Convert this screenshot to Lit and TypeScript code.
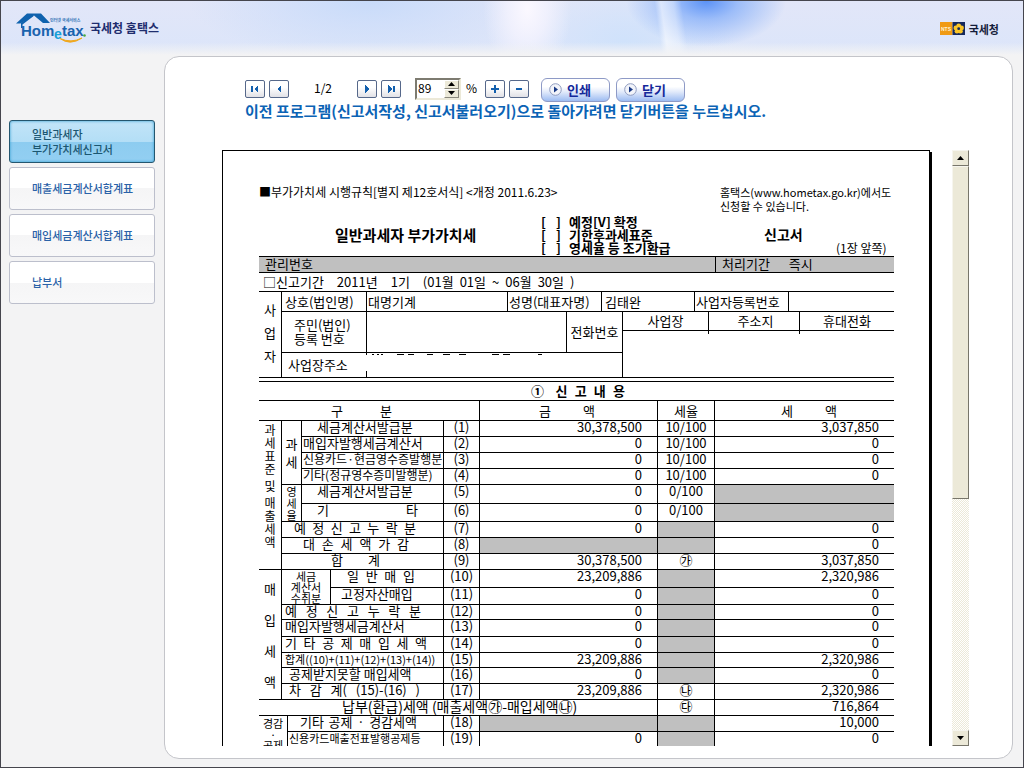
import { LitElement, html, css, svg, nothing } from "lit";
import { customElement, property, state } from "lit/decorators.js";
import { classMap } from "lit/directives/class-map.js";

type Label = {
  text: string;
  span: number;
  cls?: string;
  left?: number;
  right?: number;
};

type Group = { lines: string[]; rows: number; span: number; cls: string };

type Row = {
  h: number;
  groups?: Group[];
  label: Label;
  no?: string;
  amount?: string | null;
  rate?: string | null;
  tax?: string | null;
};

const ROWS: Row[] = [
  {
    h: 16,
    groups: [
      { lines: ["과", "세", "표", "준", "", "및", "", "매", "출", "세", "액"], rows: 9, span: 1, cls: "stack-13 small top" },
      { lines: ["과", "세"], rows: 4, span: 2, cls: "stack-18" },
    ],
    label: { text: "세금계산서발급분", span: 2, left: 15 },
    no: "(1)", amount: "30,378,500", rate: "10/100", tax: "3,037,850",
  },
  { h: 16, label: { text: "매입자발행세금계산서", span: 2, left: 1 }, no: "(2)", amount: "0", rate: "10/100", tax: "0" },
  { h: 16, label: { text: "신용카드·현금영수증발행분", span: 2, left: 1, cls: "small" }, no: "(3)", amount: "0", rate: "10/100", tax: "0" },
  { h: 16, label: { text: "기타(정규영수증미발행분)", span: 2, left: 1, cls: "small" }, no: "(4)", amount: "0", rate: "10/100", tax: "0" },
  {
    h: 19,
    groups: [{ lines: ["영", "세", "율"], rows: 2, span: 2, cls: "stack-12 tiny" }],
    label: { text: "세금계산서발급분", span: 2, left: 15 },
    no: "(5)", amount: "0", rate: "0/100", tax: null,
  },
  { h: 18, label: { text: "기 타", span: 2, left: 15, right: 25 }, no: "(6)", amount: "0", rate: "0/100", tax: null },
  { h: 16, label: { text: "예 정 신 고 누 락 분", span: 4, left: 12, right: 27 }, no: "(7)", amount: "0", rate: null, tax: "0" },
  { h: 16, label: { text: "대 손 세 액 가 감", span: 4, left: 21, right: 34 }, no: "(8)", amount: null, rate: null, tax: "0" },
  { h: 16, label: { text: "합 계", span: 4, left: 49, right: 63 }, no: "(9)", amount: "30,378,500", rate: "㉮", tax: "3,037,850" },
  {
    h: 18,
    groups: [
      { lines: ["매", "입", "세", "액"], rows: 8, span: 1, cls: "stack-31" },
      { lines: ["세금", "계산서", "수취분"], rows: 2, span: 3, cls: "stack-11 tiny" },
    ],
    label: { text: "일 반 매 입", span: 1, left: 16, right: 28 },
    no: "(10)", amount: "23,209,886", rate: null, tax: "2,320,986",
  },
  { h: 17, label: { text: "고정자산매입", span: 1, left: 10 }, no: "(11)", amount: "0", rate: null, tax: "0" },
  { h: 15, label: { text: "예 정 신 고 누 락 분", span: 4, left: 3, right: 22 }, no: "(12)", amount: "0", rate: null, tax: "0" },
  { h: 17, label: { text: "매입자발행세금계산서", span: 4, left: 3 }, no: "(13)", amount: "0", rate: null, tax: "0" },
  { h: 16, label: { text: "기 타 공 제 매 입 세 액", span: 4, left: 3, right: 16 }, no: "(14)", amount: "0", rate: null, tax: "0" },
  { h: 15, label: { text: "합계((10)+(11)+(12)+(13)+(14))", span: 4, left: 3, cls: "tiny" }, no: "(15)", amount: "23,209,886", rate: null, tax: "2,320,986" },
  { h: 16, label: { text: "공제받지못할 매입세액", span: 4, left: 7 }, no: "(16)", amount: "0", rate: null, tax: "0" },
  { h: 16, label: { text: "차 감 계( (15)-(16) )", span: 4, left: 7, right: 23 }, no: "(17)", amount: "23,209,886", rate: "㉯", tax: "2,320,986" },
  { h: 16, label: { text: "납부(환급)세액 (매출세액㉮-매입세액㉯)", span: 7, left: 83, cls: "first large" }, rate: "㉰", tax: "716,864" },
  {
    h: 16,
    groups: [{ lines: ["경감", "·", "공제"], rows: 2, span: 2, cls: "stack-11 tiny top first" }],
    label: { text: "기타 공제 · 경감세액", span: 3, left: 12, right: 26 },
    no: "(18)", amount: null, rate: null, tax: "10,000",
  },
  { h: 24, label: { text: "신용카드매출전표발행공제등", span: 3, left: 1, cls: "tiny" }, no: "(19)", amount: "0", rate: null, tax: "0" },
];

const px = (n: number) => `${n}px`;

@customElement("tax-return")
export class TaxReturn extends LitElement {
  static styles = css`
    :host {
      display: block;
      box-sizing: border-box;
      padding: 34px 35px 40px 36px;
      border: 1px solid #000;
      background: #fff;
      box-shadow: 2px 2px 0 #000;
      color: #000;
      font: 13px/14px "Noto Sans CJK KR", "Noto Sans", sans-serif;
      white-space: nowrap;
    }
    .intro { display: flex; justify-content: space-between; font-size: 12px; }
    .apply { width: 174px; margin: 0; font-size: 11px; }
    .rule { margin: 0; }
    .title {
      display: grid;
      grid-template-columns: 282px 1fr 174px;
      align-items: center;
      margin: 2px 0;
      font-size: 13px;
      line-height: 13px;
      font-weight: 700;
    }
    .title h1, .title h2 { margin: 0; line-height: 13px; }
    .title h1 { padding-left: 76px; font-size: 15px; }
    .title h2 { width: 72px; font-size: 14px; }
    .kinds { margin: 0; padding: 0; list-style: none; }
    .kinds li { display: flex; gap: 8px; }
    .box { display: flex; justify-content: space-between; width: 20px; }
    .side { display: flex; align-self: stretch; align-items: center; padding-left: 44px; }
    .page-no { align-self: flex-end; font-size: 12px; font-weight: 400; }
    .manage {
      display: flex;
      box-sizing: border-box;
      height: 17px;
      border-top: 1px solid #000;
      border-bottom: 1px solid #000;
      background: #c0c0c0;
    }
    .manage div { flex: 1; padding-left: 6px; }
    .manage .term { flex: none; width: 179px; box-sizing: border-box; display: flex; gap: 19px; border-left: 1px solid #000; }
    .period { display: flex; gap: 13px; height: 18px; padding-left: 4px; line-height: 18px; }
    .range { display: flex; gap: 6px; }
    table { width: 100%; table-layout: fixed; border-collapse: separate; border-spacing: 0; }
    td, th {
      padding: 0;
      border-top: 1px solid #000;
      border-left: 1px solid #000;
      font-weight: inherit;
      vertical-align: top;
      text-align: left;
    }
    .first { border-left: 0; }
    .owner { border-bottom: 1px solid #000; margin-bottom: 3px; }
    .owner td, .owner th { vertical-align: middle; }
    .owner .center, .center { text-align: center; }
    .left-1 { padding-left: 1px; }
    .left-3 { padding-left: 3px; }
    .left-6 { padding-left: 6px; }
    .left-12 { padding-left: 12px; }
    .owner .blank-phone {
      background:
        linear-gradient(#000, #000) 85px 0 / 1px 3px no-repeat,
        linear-gradient(#000, #000) 176px 0 / 1px 3px no-repeat;
    }
    .owner .address { border-left: 0; vertical-align: top; }
    .remains { display: block; width: 100%; height: 24px; }
    .report { line-height: 12px; }
    .wide { text-align-last: justify; }
    .subject { font-weight: 700; padding: 0 269px 0 272px; text-align-last: justify; vertical-align: middle; }
    .head th { vertical-align: middle; }
    .h-kind { padding: 0 87px 0 72px; }
    .h-amount { padding: 0 62px 0 59px; }
    .h-tax { padding: 0 57px 0 66px; }
    .num { text-align: right; padding-right: 15px; }
    .shade { background: #c0c0c0; }
    .large { font-size: 14px; }
    .small { font-size: 12px; }
    .tiny { font-size: 11px; }
    .group { text-align: center; vertical-align: middle; }
    .group span { display: block; }
    .stack-11 span { line-height: 11px; }
    .stack-12 span { line-height: 12px; }
    .stack-13 span { line-height: 13px; }
    .stack-18 span { line-height: 18px; }
    .stack-23 span { line-height: 23px; }
    .stack-31 span { line-height: 31px; }
    .group .gap { height: 4px; }
    .group.top { vertical-align: top; padding-top: 2px; }
    .owner .stack-23 { padding-bottom: 4px; }
  `;

  private group(g: Group, first: boolean) {
    return html`<th class="group ${g.cls} ${first ? "first" : ""}" rowspan=${g.rows} colspan=${g.span} scope="rowgroup">
      ${g.lines.map((l) => html`<span class=${classMap({ gap: !l })}>${l}</span>`)}
    </th>`;
  }

  private row(r: Row) {
    const { label: l } = r;
    const pad = `padding-left:${px(l.left ?? 0)};padding-right:${px(l.right ?? 0)}`;
    const cell = (v: string | null | undefined, cls: string) =>
      html`<td class="${cls} ${v === null ? "shade" : ""}">${v ?? nothing}</td>`;
    return html`<tr style="height:${px(r.h)}">
      ${r.groups?.map((g) => this.group(g, g.rows > 7))}
      <th class="${l.cls ?? ""} ${l.right ? "wide" : ""}" colspan=${l.span} style=${pad} scope="row">${l.text}</th>
      ${r.no ? html`<td class="center">${r.no}</td>${cell(r.amount, "num")}` : nothing}
      ${cell(r.rate, "center")} ${cell(r.tax, "num")}
    </tr>`;
  }

  private cols(widths: number[]) {
    return html`<colgroup>
      ${widths.map((w) => html`<col style="width:${px(w)}" />`)}
      <col />
    </colgroup>`;
  }

  render() {
    return html`
      <div class="intro">
        <p class="rule">■부가가치세 시행규칙[별지 제12호서식] &lt;개정 2011.6.23&gt;</p>
        <p class="apply">홈택스(www.hometax.go.kr)에서도<br />신청할 수 있습니다.</p>
      </div>
      <div class="title">
        <h1>일반과세자 부가가치세</h1>
        <ul class="kinds">
          ${["예정[V] 확정", "기한후과세표준", "영세율 등 조기환급"].map(
            (k) => html`<li><span class="box"><span>[</span><span>]</span></span>${k}</li>`
          )}
        </ul>
        <div class="side"><h2>신고서</h2><span class="page-no">(1장 앞쪽)</span></div>
      </div>
      <div class="manage">
        <div>관리번호</div>
        <div class="term"><span>처리기간</span><span>즉시</span></div>
      </div>
      <div class="period">
        <span>□신고기간</span><span>2011년</span><span>1기</span>
        <span class="range"><span>(01월</span><span>01일</span><span>~</span><span>06월</span><span>30일</span><span>)</span></span>
      </div>
      <table class="owner">
        ${this.cols([22, 85, 141, 59, 35, 21, 72, 14, 80, 11])}
        <tbody>
          <tr style="height:20px">
            <th class="group stack-23 first" rowspan="4"><span>사</span><span>업</span><span>자</span></th>
            <th class="left-3">상호(법인명)</th>
            <td class="left-1">대명기계</td>
            <th class="left-1" colspan="2">성명(대표자명)</th>
            <td class="left-3" colspan="2">김태완</td>
            <th class="left-1" colspan="2">사업자등록번호</th>
            <td colspan="2"></td>
          </tr>
          <tr style="height:19px">
            <th class="left-12" rowspan="2">주민(법인)<br />등록 번호</th>
            <td colspan="2" rowspan="2"></td>
            <th class="center" colspan="2" rowspan="2">전화번호</th>
            <th class="center" colspan="2">사업장</th>
            <th class="center" colspan="2">&nbsp;주소지</th>
            <th class="center">휴대전화</th>
          </tr>
          <tr style="height:22px">
            <td class="blank-phone" colspan="5" rowspan="2"></td>
          </tr>
          <tr style="height:25px">
            <th class="left-6">사업장주소</th>
            <td class="address" colspan="4">
              <svg class="remains" aria-hidden="true" shape-rendering="crispEdges">
                ${svg`<path d="M0.5 0v2M0.5 18v6" stroke="#000"/>
                <path d="M6 1.5h2M11 1.5h2M15 1.5h2M31 1.5h7M42 1.5h6M61 1.5h6M77 1.5h7M93 1.5h7M126 1.5h7M137 1.5h7M172 1.5h4" stroke="#000"/>`}
              </svg>
            </td>
          </tr>
        </tbody>
      </table>
      <table class="report">
        ${this.cols([22, 6, 14, 29, 113, 36, 178, 57])}
        <thead>
          <tr style="height:19px"><th class="first subject" colspan="9">① 신 고 내 용</th></tr>
          <tr class="head" style="height:20px">
            <th class="first wide h-kind" colspan="6">구 분</th>
            <th class="wide h-amount">금 액</th>
            <th class="center">세율</th>
            <th class="wide h-tax">세 액</th>
          </tr>
        </thead>
        <tbody>
          ${ROWS.map((r) => this.row(r))}
        </tbody>
      </table>
    `;
  }
}

@customElement("page-scrollbar")
export class PageScrollbar extends LitElement {
  static styles = css`
    :host { display: flex; flex-direction: column; width: 17px; }
    button {
      height: 16px;
      padding: 0;
      border: 1px solid;
      border-color: #f6f5ee #77756a #77756a #f6f5ee;
      background: #ece9d8;
      display: grid;
      place-items: center;
    }
    .track { flex: 1; background: repeating-conic-gradient(#ece9d8 0 25%, #fff 0 50%) 0 0 / 2px 2px; }
    .thumb {
      box-sizing: border-box;
      height: 59%;
      border: 1px solid;
      border-color: #f6f5ee #77756a #77756a #f6f5ee;
      background: #ece9d8;
    }
  `;
  render() {
    return html`
      <button aria-label="위로"><svg width="7" height="4"><path d="M0 4L3.5 0L7 4z" /></svg></button>
      <div class="track"><div class="thumb"></div></div>
      <button aria-label="아래로"><svg width="7" height="4"><path d="M0 0L3.5 4L7 0z" /></svg></button>
    `;
  }
}

@customElement("app-root")
export class AppRoot extends LitElement {
  @property({ type: Number }) zoom = 89;
  @state() private active = 0;

  static styles = css`
    :host {
      display: flex;
      flex-direction: column;
      box-sizing: border-box;
      height: 100vh;
      border: 1px solid #45454d;
      background: #f3f3f4;
      font-family: "Noto Sans CJK KR", "Noto Sans", sans-serif;
    }
    header {
      display: flex;
      justify-content: space-between;
      flex: none;
      height: 55px;
      padding: 0 24px 0 15px;
      background:
        linear-gradient(to bottom, transparent 75%, #f3f3f4 98%),
        linear-gradient(82deg, transparent 64.2%, #ffffff90 64.8%, #ffffff60 66%, transparent 66.8%),
        radial-gradient(ellipse 80px 46px at 69% 0, #5b92f6 0, #8cb3f9cc 40%, transparent 100%),
        radial-gradient(ellipse 44px 70px at 51.5% 8px, #fbf8ff 0, #f4f3fecc 45%, transparent 100%),
        radial-gradient(ellipse 180px 60px at 36% 0, #c8dbfa 0, transparent 100%),
        radial-gradient(ellipse 110px 60px at 61% 40px, #d0e2fb 0, transparent 100%),
        linear-gradient(to bottom, #e2e6f8, #dbe5fa);
    }
    .brand { display: flex; gap: 4px; text-decoration: none; color: #1f2d6e; }
    .brand svg { margin-top: 9px; }
    .brand b { font-size: 12px; line-height: 54px; }
    .agency { display: flex; align-items: center; gap: 4px; color: #141c3a; font-size: 11px; line-height: 54px; font-weight: 700; }
    .body { display: flex; flex: 1; min-height: 0; }
    nav { display: flex; flex-direction: column; gap: 4px; flex: none; width: 146px; padding: 64px 9px 0 8px; }
    nav button {
      height: 43px;
      padding: 0 0 0 22px;
      border: 1px solid #bcbfcc;
      border-radius: 3px;
      background: linear-gradient(#fff 50%, #f5f5f6 50%, #f8f8f9);
      color: #2a62a8;
      font: 500 11px/15px "Noto Sans CJK KR", "Noto Sans", sans-serif;
      text-align: left;
      white-space: pre-line;
    }
    nav .on {
      border-color: #24566f;
      background: linear-gradient(#c2e4f8, #b3def6 52%, #8dccf0 52%, #93cff2);
      box-shadow: inset 0 0 3px #2b9bd0;
      color: #1b5670;
    }
    main {
      display: flex;
      flex-direction: column;
      flex: 1;
      min-width: 0;
      margin: 0 10px 8px 0;
      padding: 21px 43px 12px 57px;
      border: 1px solid #c4c5ca;
      border-radius: 15px;
      background: #fff;
    }
    .tools { display: flex; align-items: center; height: 23px; padding-left: 23px; font-size: 12px; line-height: 20px; }
    .sq {
      display: grid;
      place-items: center;
      width: 20px;
      height: 18px;
      margin: 0 4px 2px 0;
      padding: 0;
      border: 1px solid #56688a;
      border-radius: 2px;
      background: linear-gradient(#fff 40%, #e1e1e6);
    }
    .sq path { fill: #1360ae; }
    .pages { box-sizing: border-box; width: 64px; padding: 0 4px 4px 0; text-align: center; }
    .spin {
      display: flex;
      box-sizing: border-box;
      width: 46px;
      height: 22px;
      margin: 0 0 2px 10px;
      border: 2px solid;
      border-color: #7d7b70 #ece9d8 #ece9d8 #7d7b70;
      background: #fff;
    }
    .spin input {
      flex: 1;
      min-width: 0;
      padding: 0 0 2px 1px;
      border: 0;
      font: 12px/16px "Noto Sans CJK KR", sans-serif;
      appearance: textfield;
      -moz-appearance: textfield;
    }
    .spin input::-webkit-inner-spin-button { display: none; }
    .steps { display: flex; flex-direction: column; width: 15px; }
    .steps button {
      flex: 1;
      display: grid;
      place-items: center;
      padding: 0;
      border: 1px solid;
      border-color: #fff #8b897d #8b897d #fff;
      background: #ece9d8;
    }
    .percent { width: 24px; padding: 0 0 4px 5px; box-sizing: border-box; }
    .act {
      display: flex;
      align-items: center;
      gap: 5px;
      width: 69px;
      height: 24px;
      margin: 0 6px 0 0;
      padding: 0 0 0 7px;
      border: 1px solid #8e9ac6;
      border-radius: 6px;
      background: linear-gradient(#fff 35%, #dfe8fa 60%, #9dbcf2);
      color: #14289a;
      font: 700 13px/20px "Noto Sans CJK KR", sans-serif;
    }
    .first-act { margin-left: 8px; }
    .guide { margin: 0 0 29px; padding-left: 23px; color: #0b63b5; font-size: 15px; line-height: 20px; font-weight: 700; }
    .viewer { display: flex; flex: 1; gap: 20px; min-height: 0; }
    .sheet { flex: 1; min-width: 0; padding-right: 2px; overflow: hidden; }
  `;

  private items = ["일반과세자\n부가가치세신고서", "매출세금계산서합계표", "매입세금계산서합계표", "납부서"];

  private sq(label: string, d: string) {
    return html`<button class="sq" aria-label=${label}>
      <svg width="12" height="10" viewBox="0 0 12 10" shape-rendering="crispEdges"><path d=${d} /></svg>
    </button>`;
  }

  private act(text: string, first: boolean) {
    return html`<button class="act ${first ? "first-act" : ""}">
      <svg width="13" height="13" viewBox="0 0 13 13">
        <circle cx="6.5" cy="6.5" r="5.8" fill="#f2f4fa" stroke="#8f9cc0" />
        <path d="M5 3.5L9 6.5L5 9.5z" fill="#1a3a86" />
      </svg>${text}
    </button>`;
  }

  private step(n: number) {
    this.zoom += n;
  }

  render() {
    return html`
      <header>
        <a class="brand" href="#" aria-label="홈택스">
          <svg width="70" height="35" viewBox="0 0 70 35">
            <path d="M0 13.500L11 3.500H25L34 13H27L18 5.500L4.500 13.500z" fill="#0f62ae" />
            <path d="M5 13L15 6L18 5.800L6.500 14.500V18H5z" fill="#0f62ae" />
            <text x="34" y="12" font-size="4" font-weight="700" fill="#3977b8">인터넷 국세서비스</text>
            <text x="5" y="26" font-family="Liberation Sans" font-weight="700" font-size="15" fill="#1a63ae">Hom</text>
            <text x="38" y="29" font-family="Liberation Sans" font-weight="700" font-size="14" fill="#18a0d8">e</text>
            <text x="46" y="26" font-family="Liberation Sans" font-weight="700" font-size="15" fill="#1a63ae">tax</text>
            <path d="M44 28.500Q54 36 66 28Q55 33.500 44 28.500z" fill="#f0a81e" stroke="#f0a81e" />
            <circle cx="68.500" cy="25.500" r="1.300" fill="#49a942" />
          </svg>
          <b>국세청 홈택스</b>
        </a>
        <div class="agency">
          <svg width="25" height="13" viewBox="0 0 25 13">
            <rect width="12.500" height="13" fill="#f09a14" />
            <rect x="12.500" width="12.500" height="13" fill="#16295c" />
            <text x="1" y="9" font-family="Liberation Sans" font-weight="700" font-size="5" fill="#fff3cf">NTS</text>
            <g fill="#fbc526">
              <circle cx="18.700" cy="3.800" r="2.400" /><circle cx="15.900" cy="6" r="2.400" />
              <circle cx="21.500" cy="6" r="2.400" /><circle cx="17" cy="9.200" r="2.400" />
              <circle cx="20.400" cy="9.200" r="2.400" />
            </g>
            <circle cx="18.700" cy="6.700" r="1.400" fill="#16295c" />
          </svg>
          국세청
        </div>
      </header>
      <div class="body">
        <nav>
          ${this.items.map(
            (t, i) => html`<button class=${classMap({ on: i === this.active })} @click=${() => (this.active = i)}>${t}</button>`
          )}
        </nav>
        <main>
          <div class="tools">
            ${this.sq("첫 페이지", "M2 2h2v6h-2zM5 5l4-4v8z")}
            ${this.sq("이전 페이지", "M4 5l4-4v8z")}
            <span class="pages">1/2</span>
            ${this.sq("다음 페이지", "M8 5l-4-4v8z")}
            ${this.sq("마지막 페이지", "M8 2h2v6h-2zM7 5l-4-4v8z")}
            <span class="spin">
              <input id="zoom" type="number" .value=${String(this.zoom)} aria-label="배율" />
              <span class="steps">
                <button aria-label="확대" @click=${() => this.step(1)}><svg width="7" height="4"><path d="M0 4L3.500 0L7 4z" /></svg></button>
                <button aria-label="축소" @click=${() => this.step(-1)}><svg width="7" height="4"><path d="M0 0L3.500 4L7 0z" /></svg></button>
              </span>
            </span>
            <label class="percent" for="zoom">%</label>
            ${this.sq("크게", "M5 1h2v3h3v2h-3v3h-2v-3h-3v-2h3z")}
            ${this.sq("작게", "M3 4h6v2h-6z")}
            ${this.act("인쇄", true)} ${this.act("닫기", false)}
          </div>
          <p class="guide">이전 프로그램(신고서작성, 신고서불러오기)으로 돌아가려면 닫기버튼을 누르십시오.</p>
          <div class="viewer">
            <div class="sheet"><tax-return></tax-return></div>
            <page-scrollbar></page-scrollbar>
          </div>
        </main>
      </div>
    `;
  }
}
